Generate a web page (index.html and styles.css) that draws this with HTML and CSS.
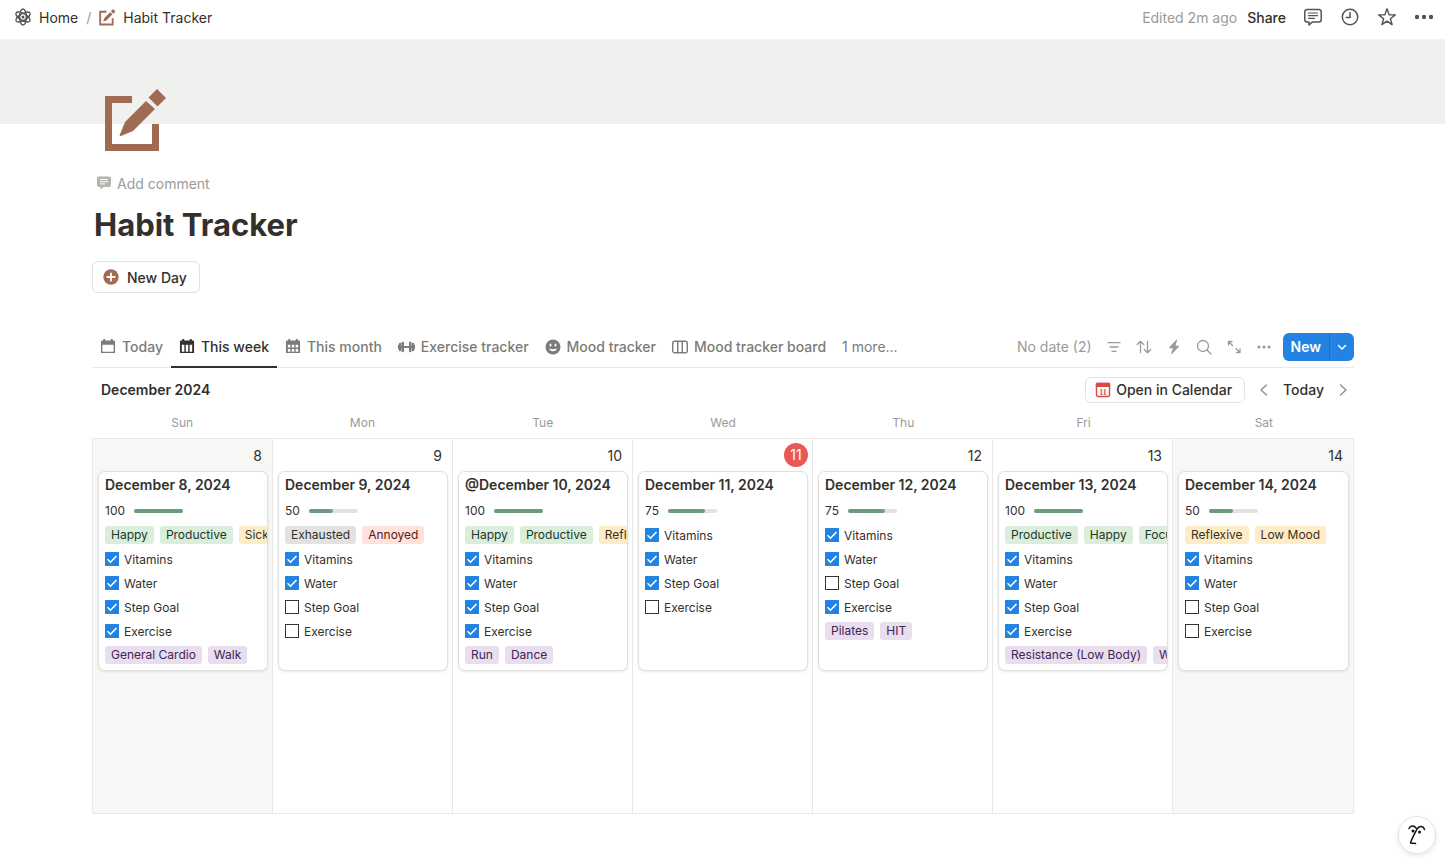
FILE: index.html
```html
<!DOCTYPE html>
<html lang="en">
  <head>
    <meta charset="UTF-8" />
    <title>Habit Tracker</title>
    <link rel="stylesheet" href="styles.css" />
  </head>
  <body>
    <!-- Shared icons -->
    <svg class="sprite" aria-hidden="true">
      <symbol id="i-edit" viewBox="0 0 64 64">
        <path d="M28 7H1v55h54V35h-7v20H8V14h20z" />
        <path d="M42 12l9 8-22 22-12 5c-1 .4-1.600-.3-1.200-1.200L21 33z" />
        <path d="M53 0l9 9-8.500 8.500-9-9z" />
      </symbol>
      <symbol id="i-cal-day" viewBox="-1 0 17 17">
        <path fill-rule="evenodd" d="M2.500 0h2v1.500h6V0h2v1.500h1.500a1 1 0 0 1 1 1V14a1 1 0 0 1-1 1H1a1 1 0 0 1-1-1V2.500a1 1 0 0 1 1-1h1.500zM1.500 6v7.500h12V6z" />
      </symbol>
      <symbol id="i-cal-week" viewBox="-1 0 17 17">
        <path fill-rule="evenodd" d="M2.500 0h2v1.500h6V0h2v1.500h1.500a1 1 0 0 1 1 1V14a1 1 0 0 1-1 1H1a1 1 0 0 1-1-1V2.500a1 1 0 0 1 1-1h1.500zM2 6v7.500h2.700V6zM6.200 6v7.500h2.600V6zM10.300 6v7.500H13V6z" />
      </symbol>
      <symbol id="i-cal-month" viewBox="-1 0 17 17">
        <path fill-rule="evenodd" d="M2.500 0h2v1.500h6V0h2v1.500h1.500a1 1 0 0 1 1 1V14a1 1 0 0 1-1 1H1a1 1 0 0 1-1-1V2.500a1 1 0 0 1 1-1h1.500zM2 6v3h2.700V6zM6.200 6v3h2.600V6zM10.300 6v3H13V6zM2 10.500v3h2.700v-3zM6.200 10.500v3h2.600v-3zM10.300 10.500v3H13v-3z" />
      </symbol>
    </svg>

    <header class="topbar">
      <nav class="breadcrumb">
        <a href="#">
          <svg class="icon-home" viewBox="0 0 18 18">
            <g fill="none" stroke="currentColor" stroke-width="1.400">
              <ellipse cx="9" cy="9" rx="3.400" ry="8" />
              <ellipse cx="9" cy="9" rx="3.400" ry="8" transform="rotate(60 9 9)" />
              <ellipse cx="9" cy="9" rx="3.400" ry="8" transform="rotate(120 9 9)" />
            </g>
            <circle cx="9" cy="9" r="1.500" fill="currentColor" />
          </svg>
          Home
        </a>
        <span class="slash">/</span>
        <a href="#">
          <svg class="icon-page"><use href="#i-edit" /></svg>
          Habit Tracker
        </a>
      </nav>
      <div class="topbar-actions">
        <span class="edited">Edited 2m ago</span>
        <button class="btn-plain share">Share</button>
        <button class="btn-plain" aria-label="Comments">
          <svg width="20" height="20" viewBox="0 0 20 20" fill="none" stroke="currentColor" stroke-width="1.500" stroke-linecap="round" stroke-linejoin="round">
            <path d="M4 2.500h12a2.200 2.200 0 0 1 2.200 2.200v8a2.200 2.200 0 0 1-2.200 2.200H9.500L6 18v-3.100H4a2.200 2.200 0 0 1-2.200-2.200v-8A2.200 2.200 0 0 1 4 2.500z" />
            <path stroke-width="1.200" d="M5.500 6h9M5.500 8.700h9M5.500 11.400h6" />
          </svg>
        </button>
        <button class="btn-plain" aria-label="Updates">
          <svg width="20" height="20" viewBox="0 0 20 20" fill="none" stroke="currentColor" stroke-width="1.500" stroke-linecap="round" stroke-linejoin="round">
            <circle cx="10" cy="10" r="7.700" />
            <path d="M10 5.500V10.500H6.200" />
          </svg>
        </button>
        <button class="btn-plain" aria-label="Favorite">
          <svg width="20" height="20" viewBox="0 0 20 20" fill="none" stroke="currentColor" stroke-width="1.400" stroke-linejoin="round">
            <path d="M10 1.800l2.100 5.900 6.200.2-4.900 3.800 1.700 6-5.100-3.500-5.100 3.500 1.700-6L1.700 7.900l6.200-.2z" />
          </svg>
        </button>
        <button class="btn-plain" aria-label="More">
          <svg width="20" height="20" viewBox="0 0 20 20" fill="currentColor">
            <circle cx="3" cy="10" r="2.200" /><circle cx="10" cy="10" r="2.200" /><circle cx="17" cy="10" r="2.200" />
          </svg>
        </button>
      </div>
    </header>

    <div class="cover"></div>

    <main class="page">
      <svg class="page-icon"><use href="#i-edit" /></svg>

      <button class="btn-plain add-comment">
        <svg width="14" height="14" viewBox="0 0 14 14">
          <path fill="currentColor" d="M2 .5h10a2 2 0 0 1 2 2V9a2 2 0 0 1-2 2H6.500L3.500 13.500V11H2a2 2 0 0 1-2-2V2.500a2 2 0 0 1 2-2z" />
          <path stroke="#fff" d="M3 3.500h8M3 5.700h8M3 7.900h5" />
        </svg>
        Add comment
      </button>

      <h1>Habit Tracker</h1>

      <button class="new-day">
        <svg width="16" height="16" viewBox="0 0 16 16">
          <circle cx="8" cy="8" r="7.700" fill="#9f6b53" />
          <path stroke="#fff" stroke-width="1.800" stroke-linecap="round" d="M8 4.300v7.400M4.300 8h7.400" />
        </svg>
        New Day
      </button>

      <!-- View tabs -->
      <div class="views">
        <nav class="tabs">
          <button class="tab"><svg width="16" height="16"><use href="#i-cal-day" /></svg>Today</button>
          <button class="tab active"><svg width="16" height="16"><use href="#i-cal-week" /></svg>This week</button>
          <button class="tab"><svg width="16" height="16"><use href="#i-cal-month" /></svg>This month</button>
          <button class="tab">
            <svg width="17" height="16" viewBox="0 0 18 16">
              <path d="M0 5.500h1.200v5H0zM16.800 5.500H18v5h-1.200z" />
              <rect x="1" y="3.500" width="2.300" height="9" rx="1" />
              <rect x="3.700" y="2.500" width="2.600" height="11" rx="1" />
              <rect x="11.700" y="2.500" width="2.600" height="11" rx="1" />
              <rect x="14.700" y="3.500" width="2.300" height="9" rx="1" />
              <path d="M1 7h16v2H1z" />
            </svg>Exercise tracker
          </button>
          <button class="tab">
            <svg width="16" height="16" viewBox="0 0 16 16">
              <circle cx="8" cy="8" r="7.500" />
              <g fill="#fff"><ellipse cx="5.500" cy="6" rx="1" ry="1.500" /><ellipse cx="10.500" cy="6" rx="1" ry="1.500" /></g>
              <path d="M4 9.300c.8 4 7.200 4 8 0-2 1.200-6 1.200-8 0z" fill="#fff" />
            </svg>Mood tracker
          </button>
          <button class="tab">
            <svg width="16" height="16" viewBox="0 0 16 16" fill="none" stroke="currentColor" stroke-width="1.400">
              <rect x=".7" y="2.200" width="14.600" height="11.600" rx="2" />
              <path d="M5.700 2.200v11.600M10.300 2.200v11.600" />
            </svg>Mood tracker board
          </button>
          <button class="tab more">1 more...</button>
        </nav>
        <div class="tools">
          <button class="btn-plain">No date (2)</button>
          <button class="btn-plain" aria-label="Filter">
            <svg width="16" height="16" viewBox="0 0 16 16"><path d="M2 3.700h12M4 8h8M6 12.300h4" /></svg>
          </button>
          <button class="btn-plain" aria-label="Sort">
            <svg width="16" height="16" viewBox="0 0 16 16"><path d="M4.500 13.500V2.500M1.200 5.500l3.300-3.300L7.800 5.500M11.500 2.500v11M8.200 10.500l3.300 3.300 3.300-3.300" /></svg>
          </button>
          <button class="btn-plain" aria-label="Automations">
            <svg width="16" height="16" viewBox="0 0 16 16"><path fill="currentColor" stroke="none" d="M10.300.8L3.300 8.300c-.3.400-.1.900.4.900h3.200l-1.700 5.400c-.2.600.4.900.8.500l7-7.500c.3-.4.100-.9-.4-.9H9.400l1.700-5.400c.2-.6-.4-.9-.8-.5z" /></svg>
          </button>
          <button class="btn-plain" aria-label="Search">
            <svg width="16" height="16" viewBox="0 0 16 16"><circle cx="7" cy="7" r="5.500" /><path d="M11 11l4 4" /></svg>
          </button>
          <button class="btn-plain" aria-label="Expand">
            <svg width="16" height="16" viewBox="0 0 16 16"><path d="M2.500 6V2.500H6M2.500 2.500l4 4M14 10v3.500h-3.500M14 13.500l-4-4" /></svg>
          </button>
          <button class="btn-plain" aria-label="More options">
            <svg width="16" height="16" viewBox="0 0 16 16"><g fill="currentColor" stroke="none"><circle cx="3" cy="8" r="1.500" /><circle cx="8" cy="8" r="1.500" /><circle cx="13" cy="8" r="1.500" /></g></svg>
          </button>
          <div class="new-group">
            <button class="btn-new">New</button>
            <button class="btn-new-menu" aria-label="New menu">
              <svg width="10" height="10" viewBox="0 0 10 10" fill="none" stroke="currentColor" stroke-width="1.500" stroke-linecap="round" stroke-linejoin="round"><path d="M1.500 3.500L5 7l3.500-3.500" /></svg>
            </button>
          </div>
        </div>
      </div>

      <!-- Calendar header -->
      <div class="cal-head">
        <h2>December 2024</h2>
        <div class="cal-nav">
          <button class="open-cal">
            <svg width="16" height="16" viewBox="0 0 16 16">
              <rect x="1.500" y="1.500" width="13" height="13" rx="1.500" fill="#fff" stroke="#d44c47" stroke-width="1.400" />
              <path d="M2 .8h12a1.200 1.200 0 0 1 1.200 1.200v3H.8V2A1.200 1.200 0 0 1 2 .8z" fill="#d44c47" />
              <text x="8" y="12.700" text-anchor="middle">11</text>
            </svg>
            Open in Calendar
          </button>
          <button class="btn-plain arrow" aria-label="Previous week">
            <svg width="14" height="14" viewBox="0 0 14 14"><path d="M9.500 2L4 7l5.500 5" /></svg>
          </button>
          <button class="btn-plain today">Today</button>
          <button class="btn-plain arrow" aria-label="Next week">
            <svg width="14" height="14" viewBox="0 0 14 14"><path d="M4.500 2L10 7l-5.500 5" /></svg>
          </button>
        </div>
      </div>

      <div class="weekdays">
        <span>Sun</span><span>Mon</span><span>Tue</span><span>Wed</span><span>Thu</span><span>Fri</span><span>Sat</span>
      </div>

      <div class="week">
        <section class="day weekend">
          <div class="date"><span>8</span></div>
          <article class="card">
            <h3>December 8, 2024</h3>
            <div class="row progress">100 <span class="bar"><span class="fill" style="width: 100%"></span></span></div>
            <div class="row tags"><span class="tag green">Happy</span><span class="tag green">Productive</span><span class="tag yellow">Sick</span></div>
            <label class="row"><input type="checkbox" checked />Vitamins</label>
            <label class="row"><input type="checkbox" checked />Water</label>
            <label class="row"><input type="checkbox" checked />Step Goal</label>
            <label class="row"><input type="checkbox" checked />Exercise</label>
            <div class="row tags"><span class="tag purple">General Cardio</span><span class="tag purple">Walk</span></div>
          </article>
        </section>

        <section class="day">
          <div class="date"><span>9</span></div>
          <article class="card">
            <h3>December 9, 2024</h3>
            <div class="row progress">50 <span class="bar"><span class="fill" style="width: 50%"></span></span></div>
            <div class="row tags"><span class="tag gray">Exhausted</span><span class="tag red">Annoyed</span></div>
            <label class="row"><input type="checkbox" checked />Vitamins</label>
            <label class="row"><input type="checkbox" checked />Water</label>
            <label class="row"><input type="checkbox" />Step Goal</label>
            <label class="row"><input type="checkbox" />Exercise</label>
          </article>
        </section>

        <section class="day">
          <div class="date"><span>10</span></div>
          <article class="card">
            <h3>@December 10, 2024</h3>
            <div class="row progress">100 <span class="bar"><span class="fill" style="width: 100%"></span></span></div>
            <div class="row tags"><span class="tag green">Happy</span><span class="tag green">Productive</span><span class="tag yellow">Reflexive</span></div>
            <label class="row"><input type="checkbox" checked />Vitamins</label>
            <label class="row"><input type="checkbox" checked />Water</label>
            <label class="row"><input type="checkbox" checked />Step Goal</label>
            <label class="row"><input type="checkbox" checked />Exercise</label>
            <div class="row tags"><span class="tag purple">Run</span><span class="tag purple">Dance</span></div>
          </article>
        </section>

        <section class="day">
          <div class="date"><span class="current">11</span></div>
          <article class="card">
            <h3>December 11, 2024</h3>
            <div class="row progress">75 <span class="bar"><span class="fill" style="width: 75%"></span></span></div>
            <label class="row"><input type="checkbox" checked />Vitamins</label>
            <label class="row"><input type="checkbox" checked />Water</label>
            <label class="row"><input type="checkbox" checked />Step Goal</label>
            <label class="row"><input type="checkbox" />Exercise</label>
          </article>
        </section>

        <section class="day">
          <div class="date"><span>12</span></div>
          <article class="card">
            <h3>December 12, 2024</h3>
            <div class="row progress">75 <span class="bar"><span class="fill" style="width: 75%"></span></span></div>
            <label class="row"><input type="checkbox" checked />Vitamins</label>
            <label class="row"><input type="checkbox" checked />Water</label>
            <label class="row"><input type="checkbox" />Step Goal</label>
            <label class="row"><input type="checkbox" checked />Exercise</label>
            <div class="row tags"><span class="tag purple">Pilates</span><span class="tag purple">HIT</span></div>
          </article>
        </section>

        <section class="day">
          <div class="date"><span>13</span></div>
          <article class="card">
            <h3>December 13, 2024</h3>
            <div class="row progress">100 <span class="bar"><span class="fill" style="width: 100%"></span></span></div>
            <div class="row tags"><span class="tag green">Productive</span><span class="tag green">Happy</span><span class="tag green">Focused</span></div>
            <label class="row"><input type="checkbox" checked />Vitamins</label>
            <label class="row"><input type="checkbox" checked />Water</label>
            <label class="row"><input type="checkbox" checked />Step Goal</label>
            <label class="row"><input type="checkbox" checked />Exercise</label>
            <div class="row tags"><span class="tag purple">Resistance (Low Body)</span><span class="tag purple">Walk</span></div>
          </article>
        </section>

        <section class="day weekend">
          <div class="date"><span>14</span></div>
          <article class="card">
            <h3>December 14, 2024</h3>
            <div class="row progress">50 <span class="bar"><span class="fill" style="width: 50%"></span></span></div>
            <div class="row tags"><span class="tag yellow">Reflexive</span><span class="tag yellow">Low Mood</span></div>
            <label class="row"><input type="checkbox" checked />Vitamins</label>
            <label class="row"><input type="checkbox" checked />Water</label>
            <label class="row"><input type="checkbox" />Step Goal</label>
            <label class="row"><input type="checkbox" />Exercise</label>
          </article>
        </section>
      </div>
    </main>

    <button class="ai-button" aria-label="Assistant">
      <svg width="20" height="22" viewBox="0 0 20 22" fill="none" stroke="#111" stroke-width="1.500" stroke-linecap="round" stroke-linejoin="round">
        <path d="M2 4.500C3.500 1.500 7 1.200 9 4M10.500 4.500C12.500 1.500 16.500 2 17.500 5.500M10.500 4.200C8.500 8 5 14 3.500 19l5 .6" />
        <g fill="#111" stroke="none"><circle cx="6" cy="7" r="1.500" /><circle cx="12.500" cy="8" r="1.500" /></g>
      </svg>
    </button>
  </body>
</html>
```
FILE: styles.css
```css
:root {
  --text: #32302c;
  --text-muted: #7c7b77;
  --text-light: #9b9a97;
  --border: #e9e9e7;
  --brown: #9f6b53;
  --blue: #2383e2;
  --weekend: #f7f7f5;
}

* {
  box-sizing: border-box;
}

body {
  display: flex;
  flex-direction: column;
  min-height: 100vh;
  margin: 0;
  font-family: Inter, 'Liberation Sans', sans-serif;
  font-size: 14px;
  color: var(--text);
  background: #fff;
}

button {
  font: inherit;
  color: inherit;
  cursor: pointer;
}

svg {
  display: block;
  flex-shrink: 0;
}

.sprite {
  display: none;
}

.btn-plain {
  display: flex;
  align-items: center;
  padding: 0;
  border: none;
  background: none;
  white-space: nowrap;
}

/* Top bar */
.topbar {
  display: flex;
  justify-content: space-between;
  height: 40px;
  padding: 0 11px 5px 14px;
  border-bottom: 1px solid #f3f3f2;
}

.breadcrumb,
.breadcrumb a,
.topbar-actions {
  display: flex;
  align-items: center;
}
.breadcrumb {
  gap: 8px;
}
.breadcrumb a {
  gap: 7px;
  color: var(--text);
  text-decoration: none;
}
.slash {
  color: var(--text-light);
}

.icon-home {
  width: 18px;
  height: 18px;
  color: #55534e;
}
.icon-page {
  width: 17px;
  height: 17px;
  fill: var(--brown);
}

.topbar-actions {
  gap: 17px;
  color: #55534e;
}
.edited {
  margin-right: -7px;
  color: var(--text-light);
}
.share {
  font-weight: 500;
  color: var(--text);
}

/* Page header */
.cover {
  height: 84px;
  background: #f0f0ee;
}

.page {
  display: flex;
  flex: 1;
  flex-direction: column;
  align-items: flex-start;
  padding: 0 91px 45px 92px;
}

.page-icon {
  width: 64px;
  height: 64px;
  margin: -35px 0 0 12px;
  fill: var(--brown);
}

.add-comment {
  gap: 6px;
  height: 20px;
  margin: 20px 0 0 5px;
  color: var(--text-light);
}
.add-comment svg {
  color: #b5b4b1;
}

h1 {
  margin: 12px 0 0 2px;
  font-size: 31px;
  line-height: 40px;
  font-weight: 700;
}

.new-day {
  display: flex;
  align-items: center;
  gap: 8px;
  height: 32px;
  margin-top: 16px;
  padding: 0 12px 0 10px;
  border: 1px solid #e2e2e0;
  border-radius: 6px;
  background: #fff;
  font-weight: 500;
}

/* View tabs */
.views {
  display: flex;
  justify-content: space-between;
  width: 100%;
  height: 41px;
  margin-top: 34px;
  border-bottom: 1px solid var(--border);
}

.tabs,
.tools {
  display: flex;
}

.tab {
  display: flex;
  align-items: center;
  gap: 6px;
  height: 41px;
  padding: 0 8px;
  border: none;
  border-bottom: 2px solid transparent;
  background: none;
  font-weight: 500;
  color: var(--text-muted);
  white-space: nowrap;
}
.tab svg {
  fill: currentColor;
}
.tab svg[fill='none'] {
  fill: none;
}
.tab.active {
  border-bottom-color: var(--text);
  color: var(--text);
}
.tab.more {
  font-weight: 400;
}

.tools {
  align-items: center;
  gap: 14px;
  padding-bottom: 1px;
  color: var(--text-light);
}
.tools svg {
  fill: none;
  stroke: currentColor;
  stroke-width: 1.3;
  stroke-linecap: round;
  stroke-linejoin: round;
}
.tools .btn-new-menu svg {
  stroke-width: 1.5;
}

.new-group {
  display: flex;
  height: 28px;
  margin-left: -3px;
  border-radius: 6px;
  overflow: hidden;
  color: #fff;
}
.btn-new,
.btn-new-menu {
  padding: 0 8px;
  border: none;
  background: var(--blue);
}
.btn-new {
  font-weight: 600;
}
.btn-new-menu {
  padding: 0 7px;
  border-left: 1px solid #1d73c9;
}

/* Calendar header */
.cal-head {
  display: flex;
  align-items: center;
  justify-content: space-between;
  width: 100%;
  height: 43px;
  padding: 0 4px 0 9px;
}
h2 {
  margin: 0;
  font-size: 14px;
  font-weight: 600;
}

.cal-nav {
  display: flex;
  align-items: center;
  gap: 12px;
}
.open-cal {
  display: flex;
  align-items: center;
  gap: 5px;
  height: 26px;
  padding: 0 12px 0 9px;
  border: 1px solid #e2e2e0;
  border-radius: 6px;
  background: #fff;
  font-weight: 500;
}
.open-cal text {
  font-family: 'Liberation Serif', serif;
  font-size: 8px;
  font-weight: 700;
  fill: #d44c47;
}
.today {
  font-weight: 500;
}
.arrow svg {
  fill: none;
  stroke: #8f8e8a;
  stroke-width: 1.4;
  stroke-linecap: round;
  stroke-linejoin: round;
}

/* Week grid */
.weekdays,
.week {
  display: grid;
  grid-template-columns: repeat(7, minmax(0, 1fr));
  width: 100%;
}
.weekdays {
  height: 27px;
  font-size: 12px;
  line-height: 24px;
  text-align: center;
  color: var(--text-light);
}
.week {
  flex: 1;
  border: 1px solid var(--border);
}

.day {
  padding: 0 4px 5px 5px;
  border-right: 1px solid var(--border);
}
.day:last-child {
  border-right: none;
}
.weekend {
  background: var(--weekend);
}

.date {
  display: flex;
  align-items: center;
  justify-content: flex-end;
  height: 32px;
  padding-right: 6px;
}
.date .current {
  width: 24px;
  margin-right: -6px;
  border-radius: 50%;
  background: #eb5757;
  color: #fff;
  line-height: 24px;
  text-align: center;
}

.card {
  min-height: 200px;
  padding: 0 0 3px 6px;
  border: 1px solid #e0e0de;
  border-radius: 7px;
  background: #fff;
  box-shadow: 0 1px 3px rgba(15, 15, 15, 0.1);
  overflow: hidden;
}
.card h3 {
  margin: 0;
  font-size: 14px;
  line-height: 26px;
  font-weight: 600;
  white-space: nowrap;
}

.row {
  display: flex;
  align-items: center;
  gap: 5px;
  height: 24px;
  font-size: 12px;
  white-space: nowrap;
}
.row.progress {
  gap: 9px;
  height: 25px;
}

.bar {
  width: 49px;
  height: 4px;
  border-radius: 2px;
  background: #e3e2e0;
}
.fill {
  display: block;
  height: 4px;
  border-radius: 2px;
  background: #6c9b7d;
}

.row.tags {
  gap: 6px;
}
.tag {
  flex-shrink: 0;
  padding: 0 6px;
  border-radius: 3px;
  line-height: 18px;
}
.green {
  background: #dbeddb;
  color: #1c3829;
}
.yellow {
  background: #fdecc8;
  color: #402c1b;
}
.purple {
  background: #e8deee;
  color: #412454;
}
.gray {
  background: #e3e2e0;
  color: #32302c;
}
.red {
  background: #ffe2dd;
  color: #5d1715;
}

.row input {
  appearance: none;
  width: 14px;
  height: 14px;
  margin: 0;
  border: 1px solid #37352f;
  background: #fff;
}
.row input:checked {
  border: none;
  background: var(--blue)
    url("data:image/svg+xml,%3Csvg xmlns='http://www.w3.org/2000/svg' viewBox='0 0 14 14' fill='none' stroke='white' stroke-width='1.600'%3E%3Cpath d='M2.500 7.200l3 3 6-6.200'/%3E%3C/svg%3E")
    center / 14px no-repeat;
}

/* Floating assistant button */
.ai-button {
  position: fixed;
  right: 9px;
  bottom: 5px;
  display: flex;
  align-items: center;
  justify-content: center;
  width: 38px;
  height: 38px;
  padding: 0;
  border: 1px solid #e4e4e2;
  border-radius: 50%;
  background: #fff;
  box-shadow: 0 2px 5px rgba(15, 15, 15, 0.1);
}
```
